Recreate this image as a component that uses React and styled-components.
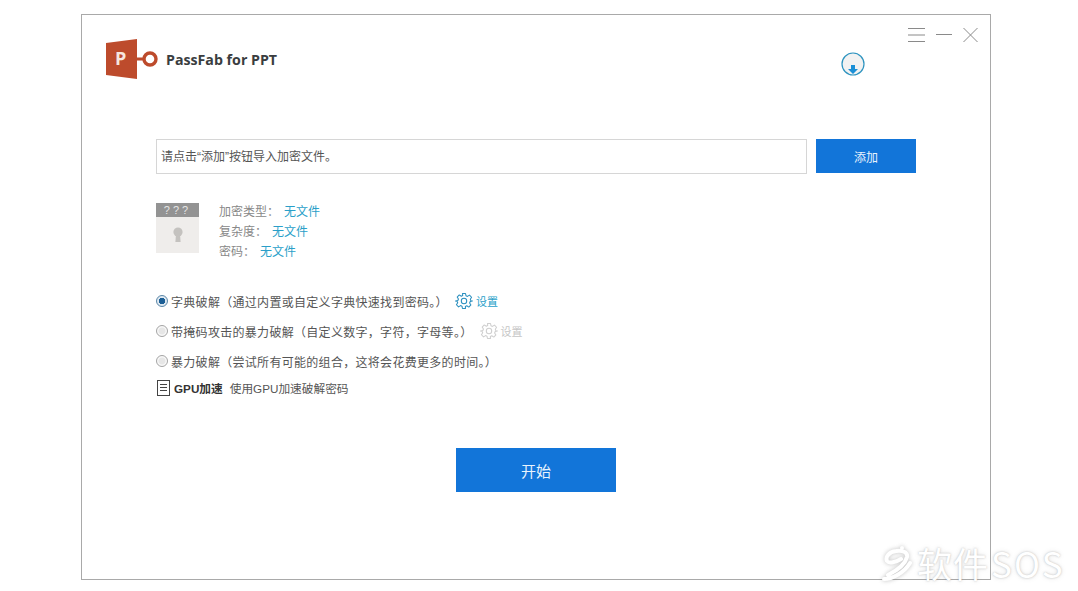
import React from 'react';
import styled, { createGlobalStyle } from 'styled-components';

const GlobalStyle = createGlobalStyle`
  html, body {
    margin: 0;
    padding: 0;
    background: #fff;
    overflow: hidden;
  }
  body {
    font-family: "Liberation Sans", "Noto Sans CJK SC", sans-serif;
  }
`;

const Page = styled.div`
  position: relative;
  width: 1078px;
  height: 591px;
  padding: 14px 0 0 81px;
  box-sizing: border-box;
  overflow: hidden;
`;

const Window = styled.div`
  width: 910px;
  height: 566px;
  box-sizing: border-box;
  border: 1px solid #a9a9a9;
  background: #fff;
  display: flex;
  flex-direction: column;
`;

const Header = styled.header`
  height: 124px;
  flex: none;
  box-sizing: border-box;
  padding: 13px 12px 0 24px;
  display: flex;
  justify-content: space-between;
  align-items: flex-start;
`;

const Brand = styled.div`
  display: flex;
  align-items: center;
  gap: 6px;
  margin-top: 11px;
`;

const BrandName = styled.span`
  font-family: "Open Sans", sans-serif;
  font-size: 14.2px;
  font-weight: 700;
  color: #3a3d40;
`;

const Tools = styled.div`
  display: flex;
  align-items: flex-start;
  gap: 43px;
`;

const DownloadIcon = styled.svg`
  display: block;
  margin-top: 24px;
`;

const WindowControls = styled.div`
  display: flex;
  align-items: center;
  gap: 11px;
`;

const Main = styled.main`
  flex: 1;
  padding: 0 74px;
  display: flex;
  flex-direction: column;
`;

const FileRow = styled.div`
  display: flex;
  align-items: flex-start;
  gap: 9px;
`;

const PathInput = styled.div`
  flex: 1;
  height: 35px;
  box-sizing: border-box;
  border: 1px solid #d6d6d6;
  padding: 0 4px 2px;
  display: flex;
  align-items: center;
  font-size: 12px;
  color: #555;
`;

const PrimaryButton = styled.button`
  border: 0;
  border-radius: 0;
  padding: 0;
  background: #1275d9;
  color: #e8f3fd;
  font-family: "Noto Sans CJK SC", sans-serif;
  width: ${(p) => p.$width}px;
  height: ${(p) => p.$height}px;
  font-size: ${(p) => p.$size}px;
`;

const InfoRow = styled.div`
  display: flex;
  gap: 20px;
  margin-top: 29px;
`;

const Thumb = styled.div`
  width: 43px;
  height: 50px;
  background: #efedeb;
  display: flex;
  flex-direction: column;
  align-items: center;
`;

const ThumbHead = styled.div`
  width: 100%;
  height: 14px;
  background: #939393;
  color: #e6e6e6;
  font-size: 11px;
  line-height: 14px;
  letter-spacing: 3px;
  text-align: center;
`;

const KeyholeIcon = styled.svg`
  display: block;
  margin-top: 10px;
`;

const InfoList = styled.div`
  display: flex;
  flex-direction: column;
`;

const InfoLine = styled.div`
  height: 20px;
  display: flex;
  align-items: center;
  gap: 5px;
  font-size: 12px;
  color: #888;
  margin-top: ${(p) => (p.$first ? '-3px' : '0')};
`;

const Accent = styled.span`
  color: #2a9fc9;
  font-size: 12px;
`;

const Options = styled.div`
  display: flex;
  flex-direction: column;
  margin-top: 26px;
`;

const OptionRow = styled.label`
  height: 30px;
  display: flex;
  align-items: center;
  gap: 3px;
  font-size: 12px;
  letter-spacing: 0.3px;
  color: #555;
`;

const Radio = styled.span`
  width: 12px;
  height: 12px;
  box-sizing: border-box;
  flex: none;
  border-radius: 50%;
  border: 1px solid ${(p) => (p.$checked ? '#5b87a8' : '#a4a4a4')};
  background: ${(p) =>
    p.$checked
      ? 'radial-gradient(circle, #1c5f96 0 3px, #dfe9f1 3.5px)'
      : 'radial-gradient(circle, #e6e6e6 0 3px, #f8f8f8 4px)'};
`;

const SettingLink = styled.span`
  display: flex;
  align-items: center;
  gap: 3px;
  margin-left: ${(p) => p.$offset}px;
  color: ${(p) => (p.$disabled ? '#c6c6c6' : '#2a9fc9')};
  font-size: 11px;
  letter-spacing: 0;
`;

const GpuRow = styled.div`
  display: flex;
  align-items: center;
  height: 17px;
  margin-top: 3px;
  gap: 7px;
  font-size: 11.7px;
  color: #555;
`;

const GpuBox = styled.span`
  width: 13px;
  height: 16px;
  box-sizing: border-box;
  border: 1px solid #444;
  display: flex;
  flex-direction: column;
  justify-content: center;
  gap: 2px;
  padding: 0 2px;
  margin-left: 1px;
  margin-right: -3px;
  & > i {
    display: block;
    height: 1px;
    background: #444;
  }
`;

const GpuTitle = styled.strong`
  color: #333;
  font-weight: 700;
`;

const StartWrap = styled.div`
  display: flex;
  justify-content: center;
  margin-top: 52px;
`;

const Watermark = styled.div`
  position: absolute;
  left: 917px;
  top: 541px;
  display: flex;
  align-items: center;
  font-family: "Noto Sans CJK SC", sans-serif;
  font-size: 35px;
  line-height: 44px;
  color: #fff;
  letter-spacing: 1px;
  white-space: nowrap;
  text-shadow: 0 0 2px rgba(120, 120, 120, 0.45), 0 0 5px rgba(120, 120, 120, 0.2);
`;

const WatermarkLatin = styled.span`
  margin-left: 2px;
  letter-spacing: 2px;
`;

const WatermarkMark = styled.svg`
  position: absolute;
  left: -35px;
  top: 4px;
  filter: drop-shadow(0 0 2px rgba(120, 120, 120, 0.45));
`;

const Logo = () => (
  <svg width="54" height="40" viewBox="0 0 54 40">
    <path d="M0 4 L31 0 V40 L0 36 Z" fill="#bd4b2c" />
    <text x="9" y="26" fontFamily="Open Sans, sans-serif" fontWeight="700" fontSize="18" fill="#f6e6df">P</text>
    <rect x="31" y="18.5" width="8" height="3" fill="#bd4b2c" />
    <circle cx="44" cy="20" r="6" fill="#fff" stroke="#bd4b2c" strokeWidth="3.4" />
  </svg>
);

const Gear = ({ color }) => (
  <svg width="18" height="18" viewBox="0 0 24 24" fill="none" stroke={color} strokeWidth="1.4" strokeLinejoin="round">
    <path d="M10 2h4l.7 3.1 1.9.8 2.7-1.7 2.8 2.8-1.7 2.7.8 1.9L23.3 12l-.1 0v0l-2.9.7-.8 1.9 1.7 2.7-2.8 2.8-2.7-1.7-1.9.8L14 22h-4l-.7-3.1-1.9-.8-2.7 1.7-2.8-2.8 1.7-2.7-.8-1.9L.7 12l3.1-.7.8-1.9-1.7-2.7 2.8-2.8 2.7 1.7 1.9-.8z" />
    <circle cx="12" cy="12" r="3.6" />
  </svg>
);

export default function App() {
  return (
    <>
      <GlobalStyle />
      <Page>
        <Window>
          <Header>
            <Brand>
              <Logo />
              <BrandName>PassFab for PPT</BrandName>
            </Brand>
            <Tools>
              <DownloadIcon width="24" height="24" viewBox="0 0 24 24">
                <circle cx="12" cy="12" r="11" fill="#f2f2f2" stroke="#2d93bf" strokeWidth="1.2" />
                <path d="M10 13h4v4h3l-5 5-5-5h3z" fill="#1b8fd6" />
              </DownloadIcon>
              <WindowControls>
                <svg width="17" height="14" viewBox="0 0 17 14" stroke="#8a8a8a" strokeWidth="1">
                  <path d="M0 .5h17M0 7h17M0 13.5h17" />
                </svg>
                <svg width="16" height="14" viewBox="0 0 16 14" stroke="#8a8a8a" strokeWidth="1">
                  <path d="M0 6.5h16" />
                </svg>
                <svg width="15" height="14" viewBox="0 0 15 14" stroke="#8a8a8a" strokeWidth="1" fill="none">
                  <path d="M.5 0l14 14M14.5 0L.5 14" />
                </svg>
              </WindowControls>
            </Tools>
          </Header>
          <Main>
            <FileRow>
              <PathInput>请点击“添加”按钮导入加密文件。</PathInput>
              <PrimaryButton $width={100} $height={34} $size={12}>添加</PrimaryButton>
            </FileRow>
            <InfoRow>
              <Thumb>
                <ThumbHead>???</ThumbHead>
                <KeyholeIcon width="10" height="16" viewBox="0 0 10 16">
                  <circle cx="5" cy="5" r="4.6" fill="#c4c2bf" />
                  <path d="M3 7h4l.6 8H2.4z" fill="#c4c2bf" />
                </KeyholeIcon>
              </Thumb>
              <InfoList>
                <InfoLine $first>加密类型：<Accent>无文件</Accent></InfoLine>
                <InfoLine>复杂度：<Accent>无文件</Accent></InfoLine>
                <InfoLine>密码：<Accent>无文件</Accent></InfoLine>
              </InfoList>
            </InfoRow>
            <Options>
              <OptionRow>
                <Radio $checked />
                字典破解（通过内置或自定义字典快速找到密码。）
                <SettingLink $offset={4}><Gear color="#2a8fbf" />设置</SettingLink>
              </OptionRow>
              <OptionRow>
                <Radio />
                带掩码攻击的暴力破解（自定义数字，字符，字母等。）
                <SettingLink $offset={4} $disabled><Gear color="#cfcfcf" />设置</SettingLink>
              </OptionRow>
              <OptionRow>
                <Radio />
                暴力破解（尝试所有可能的组合，这将会花费更多的时间。）
              </OptionRow>
            </Options>
            <GpuRow>
              <GpuBox><i /><i /><i /></GpuBox>
              <GpuTitle>GPU加速</GpuTitle>
              使用GPU加速破解密码
            </GpuRow>
            <StartWrap>
              <PrimaryButton $width={160} $height={44} $size={15}>开始</PrimaryButton>
            </StartWrap>
          </Main>
        </Window>
        <Watermark>
          <WatermarkMark width="30" height="36" viewBox="0 0 30 36">
            <circle cx="20" cy="3" r="2" fill="#fff" />
            <path d="M6 30C14 26 23 20 25 12c1-5-5-7-11-6C7 7 3 12 5 16c2 3 9 1 14-2M2 34c8 0 20-6 26-16" fill="none" stroke="#fff" strokeWidth="4" strokeLinecap="round" />
          </WatermarkMark>
          软件<WatermarkLatin>SOS</WatermarkLatin>
        </Watermark>
      </Page>
    </>
  );
}
